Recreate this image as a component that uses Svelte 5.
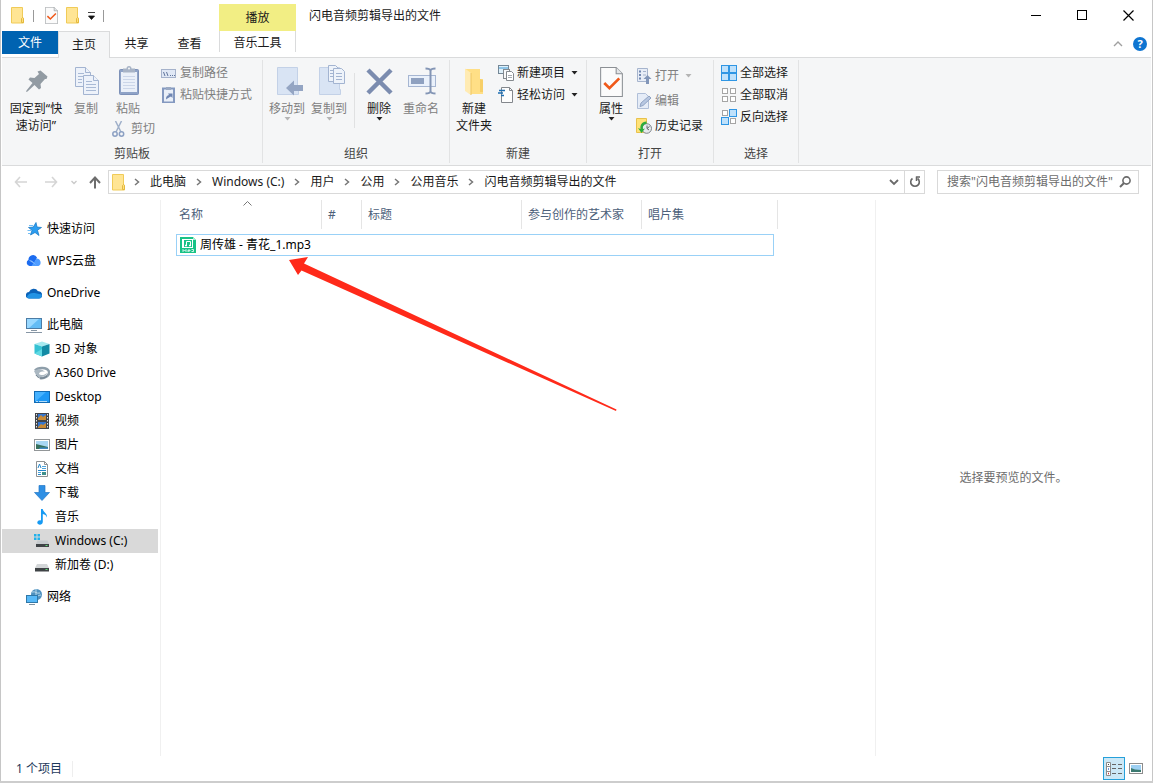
<script lang="ts">
  interface NavItem {
    label: string;
    icon: string;
    child?: boolean;
  }

  const navItems: NavItem[] = [
    { label: '快速访问', icon: 'star' },
    { label: 'WPS云盘', icon: 'wps' },
    { label: 'OneDrive', icon: 'onedrive' },
    { label: '此电脑', icon: 'pc' },
    { label: '3D 对象', icon: 'cube', child: true },
    { label: 'A360 Drive', icon: 'a360', child: true },
    { label: 'Desktop', icon: 'desktop', child: true },
    { label: '视频', icon: 'video', child: true },
    { label: '图片', icon: 'picture', child: true },
    { label: '文档', icon: 'document', child: true },
    { label: '下载', icon: 'download', child: true },
    { label: '音乐', icon: 'music', child: true },
    { label: 'Windows (C:)', icon: 'windrive', child: true },
    { label: '新加卷 (D:)', icon: 'drive', child: true },
    { label: '网络', icon: 'network' },
  ];

  const crumbs = ['此电脑', 'Windows (C:)', '用户', '公用', '公用音乐', '闪电音频剪辑导出的文件'];

  let selected = $state('Windows (C:)');
  let search = $state('');
  let view = $state('details');
</script>

{#snippet folder()}
  <svg width="14" height="17" viewBox="0 0 14 17">
    <path d="M.5 .5h11v10.500h1v5H.5z" fill="#ffe594" stroke="#f0cb58" />
    <path d="M10.500 15.500v-4l1-1 1 1v4z" fill="#ffdf7d" stroke="#e3b93f" />
  </svg>
{/snippet}

{#snippet checkDoc(w: number, h: number)}
  <svg width={w} height={h} viewBox="0 0 22 29">
    <path d="M.5 .5h15l6 6v22H.5z" fill="#fbfbfb" stroke="#8b8f94" />
    <path d="M15.500 .5v6h6" fill="#e4e6e8" stroke="#8b8f94" />
    <path d="M4 15.500l5 5 9.500-9.500" fill="none" stroke="#f0591a" stroke-width="2.600" />
  </svg>
{/snippet}

{#snippet caret(dim: boolean)}
  <svg class="caret" width="7" height="4" viewBox="0 0 7 4">
    <path d="M.5 0h6l-3 3.500z" fill={dim ? '#b4b4b4' : '#222'} />
  </svg>
{/snippet}

{#snippet chevron()}
  <svg width="6" height="8" viewBox="0 0 6 8">
    <path d="M1 1l3.500 3L1 7" fill="none" stroke="#777" stroke-width="1.500" />
  </svg>
{/snippet}

{#snippet squares(on: boolean[])}
  <svg width="16" height="16" viewBox="0 0 16 16">
    {#each on as lit, i}
      {@const x = (i % 2) * 8}
      {@const y = i > 1 ? 8 : 0}
      {#if lit}
        <rect x={x + 0.5} y={y + 0.5} width="7" height="7" fill="#bfe1fb" stroke="#2f96e4" />
      {:else}
        <rect x={x + 1.5} y={y + 1.5} width="5" height="5" fill="#fff" stroke="#a5a5a5" />
      {/if}
    {/each}
  </svg>
{/snippet}

{#snippet ribbonIcon(name: string)}
  {#if name === 'pin'}
    <svg width="32" height="32" viewBox="0 0 32 32">
      <path d="M17.500 6.500l3-1 7 6-1 2.500H25l-4.500 5 .5 4-2 1.500-4.500-4.500-7 6.500-1.500 .5 .5-1.500L12.500 18 8.500 14.500l1.500-2 4.500.5 4.500-4z" fill="#929ba3" />
    </svg>
  {:else if name === 'copy'}
    <svg width="32" height="32" viewBox="0 0 32 32">
      <g fill="#edf2fa" stroke="#a3b4d1">
        <path d="M5.500 2.500h10l5 5v14h-15z" />
        <path d="M15.500 2.500v5h5" />
        <path d="M13.500 10.500h10l5 5v14h-15z" />
        <path d="M23.500 10.500v5h5" />
      </g>
      <path d="M8 8.500h6M8 11.500h5M8 14.500h4M8 17.500h4M16 16.500h6M16 19.500h10M16 22.500h10M16 25.500h10" stroke="#a9bad5" />
    </svg>
  {:else if name === 'paste'}
    <svg width="32" height="32" viewBox="0 0 32 32">
      <rect x="7.500" y="4.500" width="19" height="25" rx="1" fill="#8fa3c7" stroke="#7d91b8" />
      <rect x="9" y="7" width="16" height="20" fill="#eaf0f9" />
      <path d="M11 11.500h12M11 14.500h12M11 17.500h12M11 20.500h12M11 23.500h12" stroke="#cbd6e9" />
      <path d="M11 3.500h3.500a2.500 2.500 0 0 1 5 0H23v4H11z" fill="#a7b3c6" />
      <circle cx="17" cy="3.500" r="1" fill="#f5f6f7" />
    </svg>
  {:else if name === 'move'}
    <svg width="32" height="32" viewBox="0 0 32 32">
      <path d="M6.500 2.500h20v22h1v5h-21z" fill="#d9e4f4" stroke="#c3d1e7" />
      <path d="M15 23l8-7.500v4.500h9v6h-9v4.500z" fill="#94a5c3" />
    </svg>
  {:else if name === 'copyTo'}
    <svg width="32" height="32" viewBox="0 0 32 32">
      <path d="M6.500 2.500h20v22h1v5h-21z" fill="#d9e4f4" stroke="#c3d1e7" />
      <g fill="#eef3fa" stroke="#a3b4d1">
        <path d="M15.500 .5h7l3 3v13h-10z" />
        <path d="M20.500 3.500h8l3 3v12h-11z" />
      </g>
      <path d="M17 5.500h3M17 8.500h3M17 11.500h3M23 8.500h6M23 11.500h6M23 14.500h6" stroke="#a3b4d1" />
    </svg>
  {:else if name === 'delete'}
    <svg width="32" height="32" viewBox="0 0 32 32">
      <path d="M5 5l23 23M28 5L5 28" stroke="#7b8caf" stroke-width="4.500" fill="none" />
    </svg>
  {:else if name === 'rename'}
    <svg width="32" height="32" viewBox="0 0 32 32">
      <rect x="3.500" y="10.500" width="27" height="11" fill="#eaf1fb" stroke="#a6b6d2" />
      <rect x="6" y="13" width="13" height="6" fill="#8fa1c0" />
      <path d="M20.500 3.500c3 0 4.500.5 5 2 .5-1.500 2-2 5-2M20.500 28.500c3 0 4.500-.5 5-2 .5 1.500 2 2 5 2M25.500 5v22" fill="none" stroke="#8395b5" stroke-width="2" />
    </svg>
  {:else if name === 'newFolder'}
    <svg width="32" height="32" viewBox="0 0 32 32">
      <path d="M7 4h15v10h3v15H11z" fill="#ffdf86" />
      <path d="M7 3.500l6 4.500v22l-6-4z" fill="#ffebb3" />
      <path d="M13 8v22" stroke="#eec662" />
      <path d="M22 14l3 1v12h-3z" fill="#f7cf68" />
    </svg>
  {:else if name === 'path'}
    <svg width="16" height="16" viewBox="0 0 16 16">
      <rect x=".5" y="4.500" width="14" height="8" fill="#e0e8f5" stroke="#a5b2cb" />
      <path d="M2.500 7l1.500 4M5.500 7l1.500 4M9 10.500h1M11 10.500h1M13 10.500h1" stroke="#60759c" />
    </svg>
  {:else if name === 'shortcut'}
    <svg width="16" height="16" viewBox="0 0 16 16">
      <rect x="2" y="1.500" width="11" height="14" fill="#e9eff8" stroke="#8499c0" stroke-width="2" />
      <path d="M5 0h5v3H5z" fill="#9aa9c3" />
      <path d="M5 12.500c0-3 1-4 3-4.500L7 6.500h4.500V11L10 9.500C8.500 10 7 11 5 12.500z" fill="#6f86b2" />
    </svg>
  {:else if name === 'cut'}
    <svg width="16" height="16" viewBox="0 0 16 16">
      <path d="M3.500 0l5.500 11M9.500 0L4 11" stroke="#9fb0ca" stroke-width="1.500" />
      <circle cx="3" cy="13" r="2.200" fill="none" stroke="#8ca0c3" stroke-width="1.500" />
      <circle cx="9.500" cy="13" r="2.200" fill="none" stroke="#8ca0c3" stroke-width="1.500" />
    </svg>
  {:else if name === 'newItem'}
    <svg width="16" height="16" viewBox="0 0 16 16">
      <rect x=".5" y=".5" width="10" height="8" fill="#dff0fa" stroke="#748796" />
      <path d="M1 3h9" stroke="#3f9ad6" />
      <rect x="5.500" y="4.500" width="6" height="9" fill="#f8f9fa" stroke="#84898e" />
      <path d="M8.500 6.500h5l2 2v7h-7z" fill="#fff" stroke="#84898e" />
      <path d="M10 10.500h4M10 12.500h4" stroke="#a5aab0" />
    </svg>
  {:else if name === 'easy'}
    <svg width="16" height="16" viewBox="0 0 16 16">
      <path d="M3.500 .5h8l3 3v12h-11z" fill="#fdfdfd" stroke="#83878c" />
      <path d="M11.500 .5v3h3" fill="none" stroke="#83878c" />
      <path d="M1 3.500h6M0 6h5M3 8.500h3" stroke="#1f6fb2" stroke-width="1.400" />
    </svg>
  {:else if name === 'open'}
    <svg width="16" height="16" viewBox="0 0 16 16">
      <path d="M1.500 .5h10v13h-10z" fill="#e7edf7" stroke="#a6b4cd" />
      <path d="M3 3.500h2M3 7h2M3 10.500h2" stroke="#7389b1" stroke-width="2" />
      <path d="M7 3.500h3M7 7h3" stroke="#a4b2ca" />
      <path d="M11.500 7l4 4h-2.500v5h-3v-5H7.500z" fill="#8296b9" />
    </svg>
  {:else if name === 'edit'}
    <svg width="16" height="16" viewBox="0 0 16 16">
      <path d="M1.500 .5h8l3 3v12h-11z" fill="#e5ecf7" stroke="#b0bfd8" />
      <path d="M4 13.500l1-3.500 8-7 2 2-8 7.500z" fill="#b7c7e1" stroke="#90a3c3" />
    </svg>
  {:else if name === 'history'}
    <svg width="16" height="16" viewBox="0 0 16 16">
      <path d="M.5 .5h10v14H.5z" fill="#ffe278" stroke="#e8c14c" />
      <circle cx="10.700" cy="10.500" r="4.800" fill="#e7eaed" stroke="#7e858b" />
      <path d="M11 7.500v3l2 1.500M11 10.500l2.500-2" fill="none" stroke="#61666b" />
      <path d="M10.500 3.500C5.500 4 4 7 4.500 11L2 10l3.500 5 3.500-4.500-2 .5c-.5-3 1-5 3.500-5z" fill="#2cab3d" />
    </svg>
  {/if}
{/snippet}

{#snippet navIcon(name: string)}
  <svg width="16" height="16" viewBox="0 0 16 16">
    {#if name === 'star'}
      <path d="M10 1.500l1 4.500 4.500.500-4 2.700L13 14.500 9 11.500 4.500 14 6 9.300 2.500 6.500 7.300 6z" fill="#2b9df0" stroke="#1173c0" stroke-width=".7" />
      <path d="M3 4.500h4M1.500 9.500h4M2 12.500h3" stroke="#72bdf4" />
    {:else if name === 'wps'}
      <path d="M3.500 13a3.300 3.300 0 0 1-1-6.200A4.500 4.500 0 0 1 11 4.500L7 13z" fill="#1c6cf0" />
      <path d="M5.500 13l5-7.500a4 4 0 0 1 2 7.500z" fill="#4e9cff" />
      <path d="M3 7.500c3-1.500 4 2 9 5.500z" fill="#8cc0ff" />
    {:else if name === 'onedrive'}
      <path d="M3 13.500a3 3 0 0 1 0-6.400A5 5 0 0 1 12 6.300 3.600 3.600 0 0 1 13 13.500z" fill="#0b62b8" />
      <path d="M.7 12C4 6.500 8 8 15.700 9.500A3 3 0 0 1 13 13.500H3a3 3 0 0 1-2.300-1.500z" fill="#2193e5" />
    {:else if name === 'pc'}
      <rect x=".5" y="1.500" width="15" height="10" fill="#63bcf5" stroke="#4c7ca5" />
      <path d="M1 2h12L3 11H1z" fill="#99d8ff" />
      <path d="M5 13.500h6M0 15.500h16" stroke="#8796a5" />
    {:else if name === 'cube'}
      <path d="M8 .5l7.500 2.500L8 5.500.5 3z" fill="#a6eaf0" />
      <path d="M.5 3L8 5.500v10L.5 12.500z" fill="#35c2d3" />
      <path d="M8 5.500L15.500 3v9.500l-7.500 3z" fill="#128ba5" />
      <path d="M.5 12.500L8 8v7.500z" fill="#61d9e3" />
    {:else if name === 'a360'}
      <path d="M1 5.500C4 2 13 2 15 6.500c1 4-5 7.500-9 6.500" fill="none" stroke="#8e9eaa" stroke-width="2.500" />
      <path d="M0 6c4-3 9-2 11 1-3-1-6 0-6 2 2 2 6 1 8-1-1 4-9 6-11 2" fill="#aab7c1" />
      <path d="M2 10c2 4 8 4 11 1" fill="none" stroke="#6c7d8b" />
    {:else if name === 'desktop'}
      <rect x=".5" y="2.500" width="15" height="11" fill="#1e98f5" stroke="#126bb4" />
      <path d="M1 3h11L2 12H1z" fill="#46b2ff" />
      <path d="M2 12.500h2M5 12.500h8" stroke="#b2ddfa" />
    {:else if name === 'video'}
      <rect x="1" y="0" width="14" height="16" fill="#42454a" />
      <rect x="4" y="1" width="8" height="6" fill="#3577d0" />
      <rect x="4" y="9" width="8" height="6" fill="#3577d0" />
      <path d="M4 5l3-3 2 2 3-2v5H4zM4 14l3-3 2 1 3-2v5H4z" fill="#c98a35" />
      <path d="M2.500 1v15M13.500 1v15" stroke="#e4e7e9" stroke-dasharray="1.500 1.500" />
    {:else if name === 'picture'}
      <rect x=".5" y="2.500" width="15" height="11" fill="#fff" stroke="#929698" />
      <rect x="2" y="4" width="12" height="8" fill="#a8d7f4" />
      <path d="M2 7l4 1 8 2v2H2z" fill="#36705d" />
      <path d="M6 10.500h8V12H5z" fill="#3f89c4" />
    {:else if name === 'document'}
      <path d="M2.500 .5h8l3 3v12h-11z" fill="#fff" stroke="#8e9294" />
      <path d="M10.500 .5v3h3" fill="none" stroke="#8e9294" />
      <path d="M4 7l1.500-4L7 7M4 9.500h8M4 13.500h3" stroke="#2587ca" fill="none" />
      <path d="M8 5.500h4M8 7.500h4M4 11.500h3" stroke="#4ea4dc" />
      <rect x="8" y="11" width="4" height="3" fill="#3f8f8b" />
    {:else if name === 'download'}
      <path d="M5 .5h6v7h4.500L8 15.500.5 7.500H5z" fill="#2e8fe4" stroke="#2377c6" stroke-width=".7" />
    {:else if name === 'music'}
      <path d="M7 0h1.800c0 3 4.700 4 4.200 8.500-1-2.500-2-3-4.200-3.500V13c-.3 4-6 3-5.500.5C3.500 11.500 5.500 11 7 11.500z" fill="#169af3" />
    {:else if name === 'windrive'}
      <path d="M0 1h2.500v2.500H0zM3.500 1H6v2.500H3.500zM0 4.500h2.500V7H0zM3.500 4.500H6V7H3.500z" fill="#20b1eb" />
      <path d="M3.500 7.500h10l1.500 3.500H2z" fill="#c6cbce" />
      <path d="M2 11h13v3H2z" fill="#3f4346" />
      <path d="M11.500 12.500h2" stroke="#60dc78" />
    {:else if name === 'drive'}
      <path d="M3 7h10l2 4H1z" fill="#d3d6d8" />
      <path d="M1 11h14v3.500H1z" fill="#3f4346" />
      <path d="M11.500 12.500h2" stroke="#60dc78" />
    {:else if name === 'network'}
      <circle cx="10.500" cy="5.500" r="5.500" fill="#4f91bf" />
      <path d="M6 3c4-1 4 2 8 1M6 7c5 2 6-1 9-1M10 0v11" fill="none" stroke="#b9daec" />
      <rect x=".5" y="6.500" width="11" height="7" fill="#57b9f8" stroke="#2f78a8" />
      <path d="M3 15.500h6" stroke="#7d91a0" />
    {/if}
  </svg>
{/snippet}

{#snippet bigButton(icon: string, label: string, dim = false, arrow = false)}
  <button class="big" class:dim>
    {@render ribbonIcon(icon)}
    <span>{label}</span>
    {#if arrow}{@render caret(dim)}{/if}
  </button>
{/snippet}

{#snippet smallButton(icon: string, label: string, dim = false, arrow = false)}
  <button class="small" class:dim>
    {@render ribbonIcon(icon)}
    <span>{label}</span>
    {#if arrow}{@render caret(dim)}{/if}
  </button>
{/snippet}

<div class="window">
  <header class="titlebar">
    <div class="quick-access">
      {@render folder()}
      <i class="tick first"></i>
      <button class="plain" aria-label="属性">{@render checkDoc(13, 17)}</button>
      <button class="plain" aria-label="新建文件夹">{@render folder()}</button>
      <button class="plain" aria-label="自定义快速访问工具栏">
        <svg width="7" height="8" viewBox="0 0 7 8"><path d="M0 .5h7M.5 4h6l-3 3.500z" fill="#111" stroke="#111" stroke-width=".8" /></svg>
      </button>
      <i class="tick"></i>
    </div>
    <div class="context">播放</div>
    <div class="title">闪电音频剪辑导出的文件</div>
    <div class="controls">
      <button aria-label="最小化"><svg width="11" height="11"><path d="M0 5.500h10" stroke="#000" /></svg></button>
      <button aria-label="最大化"><svg width="11" height="11"><rect x=".5" y=".5" width="9" height="9" fill="none" stroke="#000" /></svg></button>
      <button aria-label="关闭"><svg width="11" height="11"><path d="M.5 .5l10 10M10.500 .5l-10 10" stroke="#000" stroke-width="1.200" /></svg></button>
    </div>
  </header>

  <nav class="tabs">
    <button class="tab file">文件</button>
    <button class="tab home">主页</button>
    <button class="tab">共享</button>
    <button class="tab">查看</button>
    <button class="tab tools">音乐工具</button>
    <div class="tab-end">
      <button class="plain" aria-label="折叠功能区">
        <svg width="10" height="6" viewBox="0 0 10 6"><path d="M1 5l4-4 4 4" fill="none" stroke="#a0a0a0" stroke-width="1.400" /></svg>
      </button>
      <button class="help" aria-label="帮助">?</button>
    </div>
  </nav>

  <section class="ribbon">
    <div class="group clipboard">
      <div class="body">
        <div class="wide">{@render bigButton('pin', '固定到“快速访问”')}</div>
        {@render bigButton('copy', '复制', true)}
        <div class="paste">
          {@render bigButton('paste', '粘贴', true)}
          {@render smallButton('cut', '剪切', true)}
        </div>
        <div class="stack">
          {@render smallButton('path', '复制路径', true)}
          {@render smallButton('shortcut', '粘贴快捷方式', true)}
        </div>
      </div>
      <div class="caption">剪贴板</div>
    </div>

    <div class="group organize">
      <div class="body">
        {@render bigButton('move', '移动到', true, true)}
        {@render bigButton('copyTo', '复制到', true, true)}
        <i class="divider"></i>
        {@render bigButton('delete', '删除', false, true)}
        {@render bigButton('rename', '重命名', true)}
      </div>
      <div class="caption">组织</div>
    </div>

    <div class="group create">
      <div class="body">
        {@render bigButton('newFolder', '新建\n文件夹')}
        <div class="stack">
          {@render smallButton('newItem', '新建项目', false, true)}
          {@render smallButton('easy', '轻松访问', false, true)}
        </div>
      </div>
      <div class="caption">新建</div>
    </div>

    <div class="group open">
      <div class="body">
        <button class="big">
          <span class="doc">{@render checkDoc(23, 30)}</span>
          <span>属性</span>
          {@render caret(false)}
        </button>
        <div class="stack loose">
          {@render smallButton('open', '打开', true, true)}
          {@render smallButton('edit', '编辑', true)}
          {@render smallButton('history', '历史记录')}
        </div>
      </div>
      <div class="caption">打开</div>
    </div>

    <div class="group select">
      <div class="body">
        <div class="stack">
          <button class="small">{@render squares([true, true, true, true])}<span>全部选择</span></button>
          <button class="small">{@render squares([false, false, false, false])}<span>全部取消</span></button>
          <button class="small">{@render squares([false, true, true, false])}<span>反向选择</span></button>
        </div>
      </div>
      <div class="caption">选择</div>
    </div>
  </section>

  <div class="address-row">
    <div class="history">
      <button class="plain" aria-label="后退" disabled>
        <svg width="14" height="12" viewBox="0 0 14 12"><path d="M13 6H1.500M6 1L1.500 6 6 11" fill="none" stroke="#d5d5d5" stroke-width="1.600" /></svg>
      </button>
      <button class="plain" aria-label="前进" disabled>
        <svg width="14" height="12" viewBox="0 0 14 12"><path d="M1 6h11.500M8 1l4.500 5L8 11" fill="none" stroke="#d5d5d5" stroke-width="1.600" /></svg>
      </button>
      <button class="plain recent" aria-label="最近浏览的位置">
        <svg width="6" height="5" viewBox="0 0 6 5"><path d="M.5 1L3 3.500 5.500 1" fill="none" stroke="#c9c9c9" stroke-width="1.300" /></svg>
      </button>
      <button class="plain" aria-label="上移">
        <svg width="12" height="13" viewBox="0 0 12 13"><path d="M6 12.500V2M1 7l5-5.500L11 7" fill="none" stroke="#6d6d6d" stroke-width="2" /></svg>
      </button>
    </div>
    <div class="address">
      {@render folder()}
      <ol>
        {#each crumbs as crumb}
          <li><span class="sep">{@render chevron()}</span><a href="#path">{crumb}</a></li>
        {/each}
      </ol>
      <button class="drop" aria-label="以前的位置">
        <svg width="10" height="7" viewBox="0 0 10 7"><path d="M1 1l4 4 4-4" fill="none" stroke="#6a6a6a" stroke-width="1.800" /></svg>
      </button>
      <button class="refresh" aria-label="刷新">
        <svg width="12" height="12" viewBox="0 0 12 12">
          <path d="M8.500 2.500A4.300 4.300 0 1 1 3.500 2.500" fill="none" stroke="#666" stroke-width="1.600" />
          <path d="M7 1h4M7.500 .5v4.500" fill="none" stroke="#666" stroke-width="1.500" />
        </svg>
      </button>
    </div>
    <label class="search">
      <input type="text" aria-label="搜索" placeholder={'搜索"闪电音频剪辑导出的文件"'} bind:value={search} />
      <svg width="12" height="12" viewBox="0 0 12 12"><circle cx="7.500" cy="4.500" r="3.600" fill="none" stroke="#6a6a6a" stroke-width="1.600" /><path d="M5 7L1 11" stroke="#6a6a6a" stroke-width="2" /></svg>
    </label>
  </div>

  <main>
    <ul class="tree">
      {#each navItems as item (item.label)}
        <li class:child={item.child}>
          <button class:selected={selected === item.label} onclick={() => (selected = item.label)}>
            {@render navIcon(item.icon)}
            <span>{item.label}</span>
          </button>
        </li>
      {/each}
    </ul>

    <div class="files">
      <table>
        <colgroup>
          <col class="c-name" /><col class="c-num" /><col class="c-title" /><col class="c-artist" /><col class="c-album" /><col class="c-end" />
        </colgroup>
        <thead>
          <tr>
            <th>
              名称
              <svg class="sort" width="9" height="5" viewBox="0 0 9 5"><path d="M.5 4.500l4-4 4 4" fill="none" stroke="#777" /></svg>
            </th>
            <th>#</th>
            <th>标题</th>
            <th>参与创作的艺术家</th>
            <th colspan="2">唱片集</th>
          </tr>
        </thead>
        <tbody>
          <tr class="file-row">
            <td colspan="5">
              <div class="file-name">
                <svg width="16" height="16" viewBox="0 0 16 16">
                  <path d="M0 0h13l3 3v13H0z" fill="#18c287" />
                  <path d="M13 0v3h3z" fill="#a7ecd2" />
                  <rect x="2" y="2" width="11" height="9" fill="#fff" />
                  <rect x="4" y="3" width="8" height="7" fill="#18c287" />
                  <path d="M6.500 8.500v-4h4v4" fill="none" stroke="#fff" />
                  <path d="M5 8.500h2M9 8.500h2" stroke="#fff" stroke-width="1.500" />
                  <path d="M3 15v-2.500l1.500 1.500L6 12.500V15M8 15v-2h2v1H8M11.500 12.500h2v2h-2" fill="none" stroke="#fff" stroke-width=".8" />
                </svg>
                <span>周传雄 - 青花_1.mp3</span>
              </div>
            </td>
            <td></td>
          </tr>
        </tbody>
      </table>
      <svg class="arrow" width="330" height="156" viewBox="0 0 330 156">
        <path d="M0 3L19 0l-4 6.500L327.500 152.500l-.5 1.500L12.500 13.500 9 18z" fill="#ff2a1a" />
      </svg>
    </div>

    <aside class="preview">选择要预览的文件。</aside>
  </main>

  <footer>
    <span class="count">1 个项目</span>
    <button class="view" class:active={view === 'details'} aria-label="详细信息" onclick={() => (view = 'details')}>
      <svg width="16" height="14" viewBox="0 0 16 14">
        <path d="M.5 .5h4v13h-4zM.5 4.500h4M.5 9.500h4" fill="#fff" stroke="#8c8c8c" />
        <path d="M2 2.500h1" stroke="#444" /><path d="M2 7h1" stroke="#3b6fd0" stroke-width="1.500" /><path d="M2 11.500h1" stroke="#c33" stroke-width="1.500" />
        <path d="M6 2.500h4M12 2.500h4M6 6.500h4M12 6.500h4M6 11.500h4M12 11.500h4" stroke="#666" />
      </svg>
    </button>
    <button class="view" class:active={view === 'icons'} aria-label="大图标" onclick={() => (view = 'icons')}>
      <svg width="14" height="11" viewBox="0 0 14 11">
        <rect x=".5" y=".5" width="13" height="10" fill="#fff" stroke="#8c8c8c" />
        <rect x="2" y="2" width="10" height="7" fill="#9dd0f3" />
        <path d="M2 5l4 1.500 6 .5v2H2z" fill="#3b7a70" />
      </svg>
    </button>
  </footer>
</div>

<style>
  :global(body) {
    margin: 0;
    background: #cdcdcd;
  }

  .window {
    display: flex;
    flex-direction: column;
    box-sizing: border-box;
    min-height: calc(100vh - 2px);
    padding: 0 1px;
    background: #fff;
    border: solid #c6c6c6;
    border-width: 0 1px;
    font-family: 'Noto Sans', 'Noto Sans CJK SC', sans-serif;
    font-size: 12px;
    line-height: 16px;
    color: #1a1a1a;
    box-shadow: 0 1px 2px #999;
  }

  button {
    margin: 0;
    padding: 0;
    border: 0;
    background: none;
    font: inherit;
    color: inherit;
  }

  svg {
    display: block;
    flex: none;
  }

  ul,
  ol {
    margin: 0;
    padding: 0;
    list-style: none;
  }

  /* title bar */
  .titlebar {
    display: flex;
    height: 31px;
  }

  .quick-access {
    display: flex;
    align-items: center;
    gap: 8px;
    box-sizing: border-box;
    width: 217px;
    padding-left: 9px;
  }

  .tick {
    width: 1px;
    height: 12px;
    background: #999;
  }

  .tick.first {
    margin-right: 3px;
  }

  .context {
    width: 77px;
    margin-top: 4px;
    background: #f2ee84;
    text-align: center;
    line-height: 27px;
  }

  .title {
    flex: 1;
    padding-left: 13px;
    line-height: 31px;
  }

  .controls {
    display: flex;
  }

  .controls button {
    display: flex;
    align-items: center;
    justify-content: center;
    width: 46px;
  }

  /* ribbon tabs */
  .tabs {
    display: flex;
    height: 26px;
    border-bottom: 1px solid #dadbdc;
  }

  .tab {
    width: 53px;
    line-height: 24px;
  }

  .tab.file {
    width: 56px;
    height: 23px;
    background: #0063b1;
    color: #fff;
  }

  .tab.home {
    box-sizing: border-box;
    width: 52px;
    height: 27px;
    border: 1px solid #dadbdc;
    border-bottom: 0;
    background: #f5f6f7;
  }

  .tab.tools {
    box-sizing: border-box;
    width: 77px;
    height: 21px;
    margin-left: 3px;
    border: solid #dadbdc;
    border-width: 0 1px;
  }

  .tab-end {
    display: flex;
    align-items: center;
    gap: 10px;
    margin-left: auto;
    padding-right: 4px;
  }

  .help {
    width: 14px;
    height: 14px;
    border-radius: 50%;
    background: #0f75d1;
    color: #fff;
    font-weight: 700;
    font-size: 11px;
    line-height: 14px;
  }

  /* ribbon */
  .ribbon {
    display: flex;
    height: 107px;
    background: #f5f6f7;
    border-bottom: 1px solid #dadbdc;
  }

  .group {
    display: flex;
    flex-direction: column;
    box-sizing: border-box;
    margin: 2px 0;
    border-right: 1px solid #e2e3e4;
  }

  .clipboard {
    width: 261px;
    padding: 0 5px;
  }

  .organize {
    width: 187px;
    padding: 0 3px;
  }

  .create {
    width: 137px;
    padding: 0 3px;
  }

  .open {
    width: 127px;
    padding: 0 3px;
  }

  .select {
    width: 85px;
    padding: 0 7px;
  }

  .body {
    display: flex;
    flex: 1;
    align-items: flex-start;
  }

  .caption {
    padding-bottom: 1px;
    text-align: center;
    color: #444;
  }

  .big {
    display: flex;
    flex-direction: column;
    align-items: center;
    width: 42px;
    padding-top: 5px;
    line-height: 17px;
    white-space: pre;
  }

  .big span {
    margin-top: 3px;
  }

  .big .doc {
    height: 30px;
    margin-top: 2px;
  }

  .wide .big {
    width: 58px;
    white-space: normal;
  }

  .dim {
    color: #808080;
  }

  .small {
    display: flex;
    align-items: center;
    gap: 3px;
    height: 22px;
    white-space: nowrap;
  }

  .small .caret {
    margin-left: 3px;
  }

  .paste {
    width: 50px;
  }

  .paste .small {
    margin: 1px 0 0 5px;
  }

  .stack {
    padding-top: 2px;
  }

  .clipboard .stack {
    padding-left: 4px;
  }

  .create .stack {
    padding-left: 3px;
  }

  .open .stack {
    padding: 3px 0 0 4px;
  }

  .loose .small {
    height: 25px;
  }

  .divider {
    width: 1px;
    height: 55px;
    margin: 13px 3px 0 4px;
    background: #e0e1e2;
  }

  /* address bar */
  .address-row {
    display: flex;
    align-items: center;
    height: 32px;
    padding-right: 12px;
  }

  .history {
    display: flex;
    align-items: center;
    gap: 16px;
    box-sizing: border-box;
    width: 106px;
    padding-left: 12px;
  }

  .history .recent {
    margin: 0 -4px 0 -3px;
  }

  .address {
    display: flex;
    flex: 1;
    align-items: center;
    box-sizing: border-box;
    height: 24px;
    padding-left: 3px;
    border: 1px solid #d9d9d9;
  }

  .address ol,
  .address li {
    display: flex;
    align-items: center;
    white-space: nowrap;
  }

  .address ol {
    flex: 1;
    margin-left: -2px;
  }

  .sep {
    display: flex;
    justify-content: center;
    width: 26px;
  }

  .address a {
    color: inherit;
    text-decoration: none;
  }

  .address .drop {
    display: flex;
    justify-content: center;
    width: 20px;
  }

  .address .refresh {
    display: flex;
    align-items: center;
    justify-content: center;
    align-self: stretch;
    width: 20px;
    border-left: 1px solid #d9d9d9;
  }

  .search {
    display: flex;
    align-items: center;
    box-sizing: border-box;
    width: 202px;
    height: 24px;
    margin-left: 12px;
    padding: 0 7px 0 9px;
    border: 1px solid #d9d9d9;
  }

  .search input {
    flex: 1;
    min-width: 0;
    padding: 0;
    border: 0;
    outline: 0;
    background: none;
    font: inherit;
    color: #1a1a1a;
  }

  .search input::placeholder {
    color: #6d6d6d;
  }

  /* panes */
  main {
    display: flex;
    flex: 1;
  }

  .tree {
    box-sizing: border-box;
    width: 159px;
    margin: 2px 0 0;
    padding: 9px 2px 0 0;
    border-right: 1px solid #f0f0f0;
  }

  .tree li {
    margin-top: 8px;
  }

  .tree li.child {
    margin-top: 0;
  }

  .tree button {
    display: flex;
    align-items: center;
    gap: 5px;
    width: 100%;
    height: 24px;
    padding-left: 24px;
    color: #000;
  }

  .tree .child button {
    padding-left: 32px;
  }

  .tree .selected {
    background: #d9d9d9;
  }

  .files {
    position: relative;
    flex: 1;
    padding: 2px 0 0 15px;
  }

  table {
    table-layout: fixed;
    width: 602px;
    border-collapse: separate;
    border-spacing: 0;
  }

  .c-name { width: 146px; }
  .c-num { width: 40px; }
  .c-title { width: 160px; }
  .c-artist { width: 120px; }
  .c-album { width: 132px; }
  .c-end { width: 4px; }

  th {
    position: relative;
    height: 29px;
    padding: 0 0 0 6px;
    border-right: 1px solid #e5e5e5;
    text-align: left;
    font-weight: 400;
    color: #4c607a;
  }

  th:first-child {
    padding-left: 3px;
  }

  .sort {
    position: absolute;
    top: 1px;
    left: 67px;
  }

  thead::after {
    content: '';
    display: block;
    height: 5px;
  }

  td {
    padding: 0;
  }

  .file-name {
    display: flex;
    align-items: center;
    gap: 4px;
    height: 20px;
    padding-left: 3px;
    border: 1px solid #99d1f7;
    color: #000;
  }

  .arrow {
    position: absolute;
    top: 59px;
    left: 128px;
  }

  .preview {
    display: flex;
    align-items: center;
    justify-content: center;
    width: 275px;
    margin-top: 2px;
    border-left: 1px solid #f0f0f0;
    color: #6d6d6d;
  }

  footer {
    display: flex;
    align-items: center;
    height: 25px;
    padding-right: 4px;
    color: #1e395b;
  }

  .count {
    margin-right: auto;
    padding: 0 10px 0 14px;
    border-right: 1px solid #eee;
  }

  .view {
    display: flex;
    align-items: center;
    justify-content: center;
    box-sizing: border-box;
    width: 22px;
    height: 23px;
    border: 1px solid transparent;
  }

  .view.active {
    border-color: #26a0da;
    background: #cce8f6;
  }
</style>
